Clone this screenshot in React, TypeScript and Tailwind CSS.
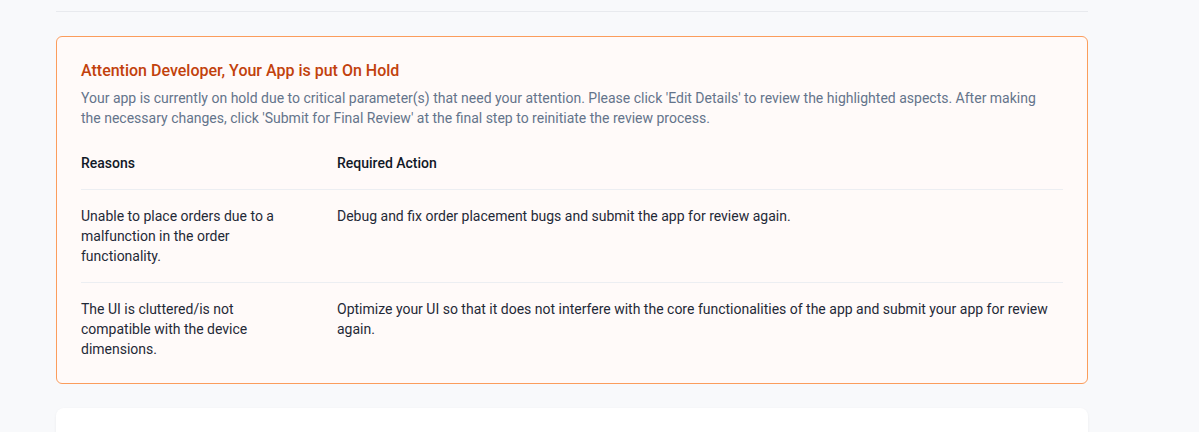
const reasons = [
  {
    reason: 'Unable to place orders due to a malfunction in the order functionality.',
    action: 'Debug and fix order placement bugs and submit the app for review again.',
  },
  {
    reason: 'The UI is cluttered/is not compatible with the device dimensions.',
    action:
      'Optimize your UI so that it does not interfere with the core functionalities of the app and submit your app for review again.',
  },
]

export default function App() {
  return (
    <div className="min-h-screen bg-[#f8f9fb] font-['Roboto',sans-serif] pt-[11px]">
      <div className="ml-[56px] w-[1032px]">
        <div className="h-px bg-[#e8eaee]" />

        <div className="mt-6 rounded-md border border-[#fb9d5c] bg-[#fffaf9] px-6 pt-[22px] pb-2">
          <h3 className="text-base leading-6 font-medium text-[#c2410c]">
            Attention Developer, Your App is put On Hold
          </h3>
          <p className="mt-[5px] max-w-[966px] text-sm leading-5 text-[#64748b]">
            Your app is currently on hold due to critical parameter(s) that need your attention. Please click 'Edit
            Details' to review the highlighted aspects. After making the necessary changes, click 'Submit for Final
            Review' at the final step to reinitiate the review process.
          </p>

          <div className="mt-[9px]">
            <div className="flex border-b border-[#eceef2] py-4 text-sm leading-5 font-medium text-[#111827]">
              <div className="w-[256px] shrink-0 pr-12">Reasons</div>
              <div className="flex-1">Required Action</div>
            </div>
            {reasons.map((row, i) => (
              <div
                key={i}
                className={`flex py-4 text-sm leading-5 text-[#1f2937] ${i < reasons.length - 1 ? 'border-b border-[#eceef2]' : ''}`}
              >
                <div className="w-[256px] shrink-0 pr-12">{row.reason}</div>
                <div className="flex-1">{row.action}</div>
              </div>
            ))}
          </div>
        </div>

        <div className="mt-6 h-[60px] rounded-lg bg-white shadow-[0_1px_3px_rgba(0,0,0,0.06)]" />
      </div>
    </div>
  )
}
